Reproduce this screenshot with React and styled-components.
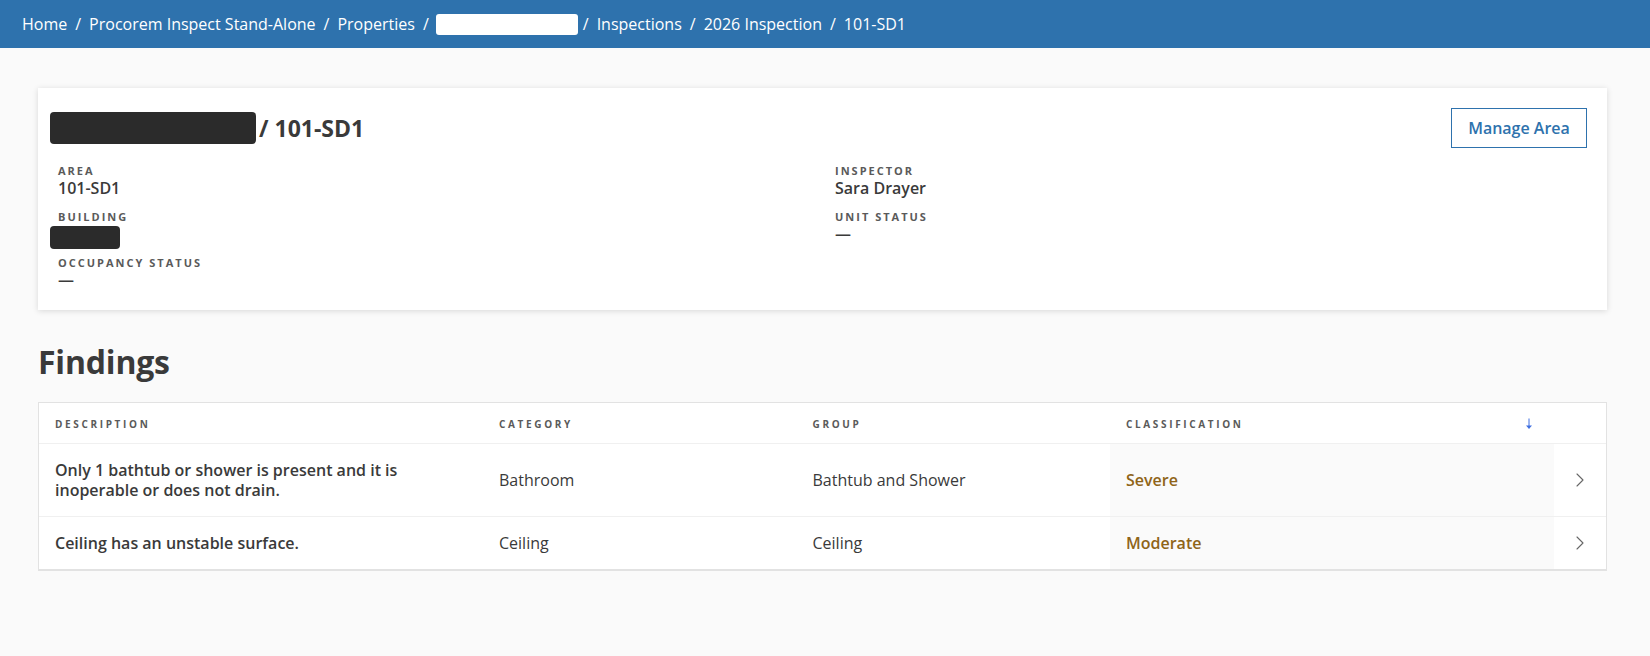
import React from 'react'
import styled, { createGlobalStyle } from 'styled-components'
import { ChevronRight } from 'lucide-react'

const crumbs = ['Home', 'Procorem Inspect Stand-Alone', 'Properties', null, 'Inspections', '2026 Inspection', '101-SD1']

const findings = [
  {
    description: 'Only 1 bathtub or shower is present and it is inoperable or does not drain.',
    category: 'Bathroom',
    group: 'Bathtub and Shower',
    classification: 'Severe',
    tall: true,
  },
  {
    description: 'Ceiling has an unstable surface.',
    category: 'Ceiling',
    group: 'Ceiling',
    classification: 'Moderate',
  },
]

const App = () => {
  return (
    <>
      <GlobalStyle />
      <TopBar>
        {crumbs.map((crumb, i) => (
          <React.Fragment key={i}>
            {i > 0 && <Slash>/</Slash>}
            {crumb ? <Crumb>{crumb}</Crumb> : <CrumbBlock />}
          </React.Fragment>
        ))}
      </TopBar>
      <Main>
        <Card>
          <CardHead>
            <Title>
              <TitleBlock />
              <span>/ 101-SD1</span>
            </Title>
            <ManageButton>Manage Area</ManageButton>
          </CardHead>
          <Details>
            <Field>
              <Label>Area</Label>
              <Value>101-SD1</Value>
            </Field>
            <Field>
              <Label>Inspector</Label>
              <Value>Sara Drayer</Value>
            </Field>
            <Field>
              <Label>Building</Label>
              <ValueBlock />
            </Field>
            <Field>
              <Label>Unit Status</Label>
              <Value>—</Value>
            </Field>
            <Field>
              <Label>Occupancy Status</Label>
              <Value>—</Value>
            </Field>
          </Details>
        </Card>
        <Heading>Findings</Heading>
        <Table>
          <HeadRow>
            <HeadCell>Description</HeadCell>
            <HeadCell>Category</HeadCell>
            <HeadCell>Group</HeadCell>
            <HeadCell>
              Classification
              <SortArrow width="8" height="12" viewBox="0 0 8 12">
                <path d="M4 0.5V9" stroke="#3f6fe0" strokeWidth="1" fill="none" />
                <path d="M1 7.5H7L4 11Z" fill="#3f6fe0" />
              </SortArrow>
            </HeadCell>
            <HeadCell />
          </HeadRow>
          {findings.map((row) => (
            <Row key={row.description} $tall={row.tall}>
              <DescriptionCell>{row.description}</DescriptionCell>
              <Cell>{row.category}</Cell>
              <Cell>{row.group}</Cell>
              <ClassCell>{row.classification}</ClassCell>
              <ChevronCell>
                <ChevronRight size={24} strokeWidth={1.1} />
              </ChevronCell>
            </Row>
          ))}
        </Table>
      </Main>
    </>
  )
}

export default App

const GlobalStyle = createGlobalStyle`
  html, body {
    margin: 0;
    padding: 0;
    min-height: 100%;
    background: #fafafa;
    color: #3a3a3a;
    font-family: "Open Sans", "Noto Sans", sans-serif;
  }
`

const TopBar = styled.nav`
  height: 48px;
  display: flex;
  align-items: center;
  padding: 0 22px;
  background: #2e72ad;
  color: #fff;
  font-size: 16px;
`
const Crumb = styled.a`
  color: #fff;
`
const Slash = styled.span`
  margin: 0 8px;
`
const CrumbBlock = styled.span`
  width: 142px;
  height: 21px;
  margin: 0 -3px 0 -1px;
  background: #fff;
  border-radius: 3px;
`

const Main = styled.main`
  padding: 40px 43px 0 38px;
`
const Card = styled.section`
  height: 222px;
  box-sizing: border-box;
  padding: 20px 20px 0 12px;
  background: #fff;
  box-shadow: 0 1px 6px rgba(0, 0, 0, 0.14);
`
const CardHead = styled.div`
  height: 40px;
  display: flex;
  align-items: center;
  justify-content: space-between;
`
const Title = styled.h1`
  margin: 0;
  display: flex;
  align-items: center;
  gap: 3px;
  font-size: 23px;
  font-weight: 700;
`
const TitleBlock = styled.span`
  width: 206px;
  height: 32px;
  background: #2b2b2b;
  border-radius: 4px;
`
const ManageButton = styled.button`
  width: 136px;
  height: 40px;
  padding: 0;
  background: #fff;
  border: 1px solid #2e72ad;
  color: #2e72ad;
  font-family: inherit;
  font-size: 16px;
  font-weight: 600;
`
const Details = styled.div`
  margin-top: 15px;
  padding-left: 8px;
  display: grid;
  grid-template-columns: 777px 1fr;
  grid-auto-rows: 46px;
`
const Field = styled.div`
  display: flex;
  flex-direction: column;
`
const Label = styled.div`
  font-size: 11px;
  line-height: 16px;
  font-weight: 700;
  letter-spacing: 2px;
  text-transform: uppercase;
  color: #5a5a5a;
`
const Value = styled.div`
  font-size: 16px;
  line-height: 18px;
  font-weight: 600;
`
const ValueBlock = styled.div`
  width: 70px;
  height: 23px;
  margin: 1px 0 0 -8px;
  background: #2b2b2b;
  border-radius: 4px;
`

const Heading = styled.h2`
  margin: 30px 0 18px;
  font-size: 32px;
  line-height: 44px;
  font-weight: 700;
  letter-spacing: -0.2px;
`

const columns = '444px 313.5px 313.5px 444px 1fr'

const Table = styled.div`
  border: 1px solid #e2e2e2;
  border-bottom-width: 2px;
  background: #fff;
`
const HeadRow = styled.div`
  height: 41px;
  padding-top: 1px;
  box-sizing: border-box;
  display: grid;
  grid-template-columns: ${columns};
  border-bottom: 1px solid #f0f0f0;
`
const HeadCell = styled.div`
  display: flex;
  align-items: center;
  justify-content: space-between;
  padding: 0 21px 0 16px;
  font-size: 10px;
  font-weight: 700;
  letter-spacing: 2.65px;
  text-transform: uppercase;
  color: #5a5a5a;
`
const SortArrow = styled.svg`
  display: block;
`
const Row = styled.div`
  height: ${(p) => (p.$tall ? '72px' : '52px')};
  display: grid;
  grid-template-columns: ${columns};
  border-bottom: 1px solid #f0f0f0;
  &:last-child {
    border-bottom: 0;
  }
`
const Cell = styled.div`
  display: flex;
  align-items: center;
  padding: 0 16px;
  font-size: 16px;
  line-height: 20px;
`
const DescriptionCell = styled(Cell)`
  font-weight: 600;
`
const ClassCell = styled(Cell)`
  background: #fafafa;
  color: #8f6418;
  font-weight: 600;
`
const ChevronCell = styled.div`
  display: flex;
  align-items: center;
  justify-content: center;
  color: #666;
`
